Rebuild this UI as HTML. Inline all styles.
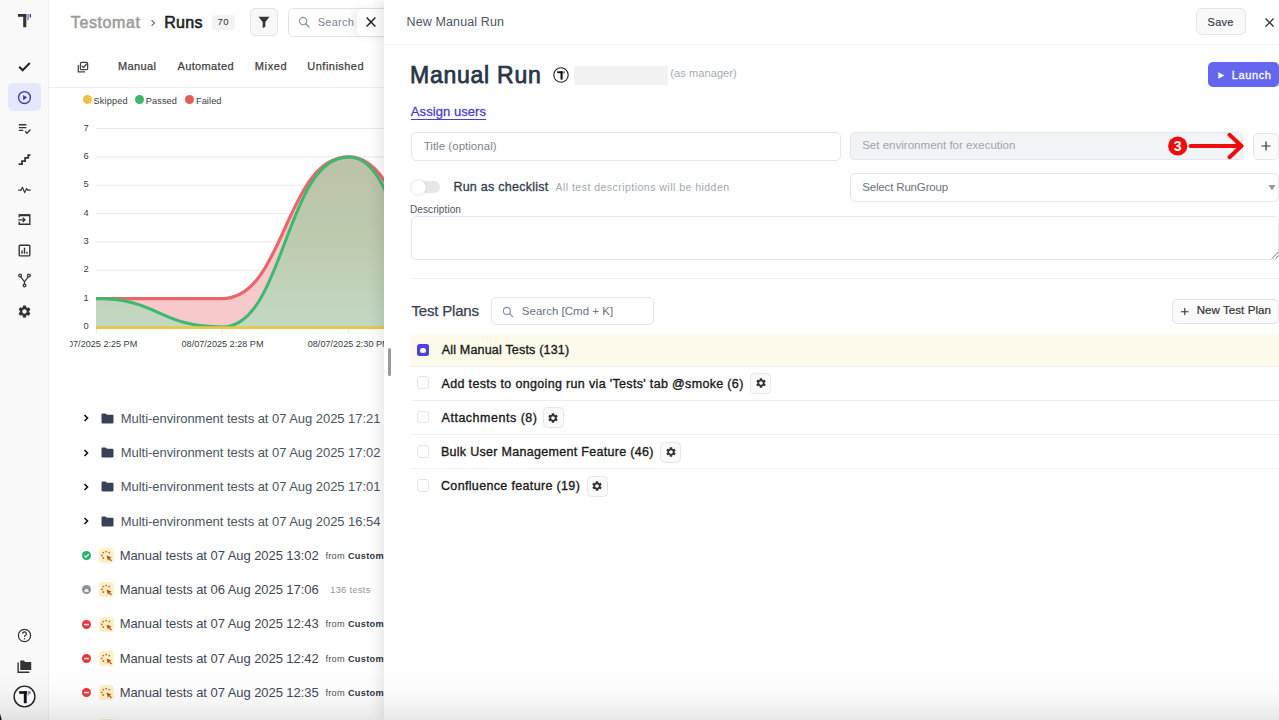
<!DOCTYPE html>
<html><head><meta charset="utf-8">
<style>
*{box-sizing:border-box;margin:0;padding:0}
html,body{width:1279px;height:720px;overflow:hidden;background:#fff;font-family:"Liberation Sans",sans-serif;}
.a{position:absolute;white-space:nowrap;line-height:1}
#side{position:absolute;left:0;top:0;width:49px;height:720px;background:#f9f9f9;border-right:1px solid #eeeeee}
#main{position:absolute;left:49px;top:0;width:336px;height:720px;background:#fff;overflow:hidden}
#drawer{position:absolute;left:385px;top:0;width:894px;height:720px;background:#fff;box-shadow:-6px 0 14px rgba(0,0,0,0.10);overflow:hidden}
</style></head><body>

<div id="side" style="z-index:0">
 <!-- logo -->
 <svg class="a" style="left:0;top:0" width="49" height="40" viewBox="0 0 49 40">
  <rect x="18" y="14" width="8.3" height="2.8" fill="#333"/>
  <rect x="23.2" y="14" width="3.1" height="13.3" rx="0.6" fill="#333"/>
  <path d="M27.2 14 L29.3 14 L28.9 20.3 L27 20.3 Z" fill="#8f98f5"/>
  <rect x="29.8" y="14" width="1.2" height="3.5" rx="0.5" fill="#333"/>
 </svg>
 <!-- check -->
 <svg class="a" style="left:17;top:59px;left:17px" width="15" height="15" viewBox="0 0 24 24"><path d="M3.5 12.5l5.5 5.5L20.5 6.5" fill="none" stroke="#222" stroke-width="3.2"/></svg>
 <!-- active play -->
 <div class="a" style="left:8px;top:83px;width:33px;height:28px;border-radius:5px;background:#e3e8fd"></div>
 <svg class="a" style="left:17px;top:90px" width="15" height="15" viewBox="0 0 24 24"><circle cx="12" cy="12" r="9.5" fill="none" stroke="#3d35b8" stroke-width="2.2"/><path d="M9.8 7.8v8.4l6.4-4.2z" fill="#3d35b8"/></svg>
 <!-- checklist -->
 <svg class="a" style="left:17px;top:121px" width="15" height="15" viewBox="0 0 24 24"><path d="M3 6h12M3 10.5h12M3 15h7" stroke="#333" stroke-width="2.1" fill="none"/><path d="M13 16.5l3 3 5.5-6" stroke="#333" stroke-width="2.1" fill="none"/></svg>
 <!-- stairs -->
 <svg class="a" style="left:17px;top:152px" width="15" height="15" viewBox="0 0 24 24"><path d="M2.5 19.5H8V14.5H13V9.5H18V5H21.5" stroke="#333" stroke-width="2.8" fill="none" stroke-linejoin="miter"/></svg>
 <!-- pulse -->
 <svg class="a" style="left:17px;top:182px" width="15" height="15" viewBox="0 0 24 24"><path d="M2 13h4.5l2.2-4.5 3.6 8.5 3-6.5 1.6 2.5H22" stroke="#333" stroke-width="1.9" fill="none" stroke-linejoin="round"/></svg>
 <!-- import -->
 <svg class="a" style="left:17px;top:212px" width="15" height="15" viewBox="0 0 24 24"><path d="M3.5 8.5V4.5h17v15h-17v-4" stroke="#333" stroke-width="2.2" fill="none"/><path d="M3.5 5.2h17" stroke="#333" stroke-width="3.2"/><path d="M2 12.5h10.5M9.2 9l3.5 3.5-3.5 3.5" stroke="#333" stroke-width="2.1" fill="none"/></svg>
 <!-- chart -->
 <svg class="a" style="left:17px;top:243px" width="15" height="15" viewBox="0 0 24 24"><rect x="3.5" y="3.5" width="17" height="17" rx="1.5" stroke="#333" stroke-width="2.2" fill="none"/><path d="M8 17v-5M12 17V7.5M16 17v-3" stroke="#333" stroke-width="2.2"/></svg>
 <!-- fork -->
 <svg class="a" style="left:17px;top:273px" width="15" height="15" viewBox="0 0 24 24"><circle cx="5" cy="4" r="2.2" stroke="#333" stroke-width="2" fill="none"/><circle cx="19" cy="4" r="2.2" stroke="#333" stroke-width="2" fill="none"/><circle cx="12" cy="20" r="2.2" stroke="#333" stroke-width="2" fill="none"/><path d="M6 6l6 8 6-8M12 14v4" stroke="#333" stroke-width="2" fill="none"/></svg>
 <!-- gear -->
 <svg class="a" style="left:17px;top:304px" width="15" height="15" viewBox="0 0 24 24"><path fill="#333" d="M19.14 12.94c.04-.3.06-.61.06-.94 0-.32-.02-.64-.07-.94l2.03-1.58a.49.49 0 0 0 .12-.61l-1.92-3.32a.488.488 0 0 0-.59-.22l-2.39.96c-.5-.38-1.03-.7-1.62-.94l-.36-2.54a.484.484 0 0 0-.48-.41h-3.84c-.24 0-.43.17-.47.41l-.36 2.54c-.59.24-1.13.57-1.62.94l-2.39-.96c-.22-.08-.47 0-.59.22L2.74 8.87c-.12.21-.08.47.12.61l2.03 1.58c-.05.3-.09.63-.09.94s.02.64.07.94l-2.03 1.58a.49.49 0 0 0-.12.61l1.92 3.32c.12.22.37.29.59.22l2.39-.96c.5.38 1.03.7 1.62.94l.36 2.54c.05.24.24.41.48.41h3.84c.24 0 .44-.17.47-.41l.36-2.54c.59-.24 1.13-.56 1.62-.94l2.39.96c.22.08.47 0 .59-.22l1.92-3.32c.12-.22.07-.47-.12-.61l-2.01-1.58zM12 15.6c-1.98 0-3.6-1.62-3.6-3.6s1.62-3.6 3.6-3.6 3.6 1.62 3.6 3.6-1.62 3.6-3.6 3.6z"/></svg>
 <!-- help -->
 <svg class="a" style="left:17px;top:628px" width="15" height="15" viewBox="0 0 24 24"><circle cx="12" cy="12" r="9.8" stroke="#333" stroke-width="2" fill="none"/><path d="M9 9.3a3 3 0 1 1 4.2 2.7c-.8.4-1.2 1-1.2 1.9v.6" stroke="#333" stroke-width="2" fill="none"/><circle cx="12" cy="17.3" r="1.2" fill="#333"/></svg>
 <!-- folders -->
 <svg class="a" style="left:16px;top:658px" width="17" height="17" viewBox="0 0 24 24"><path d="M3 6.5v13.5h16" stroke="#333" stroke-width="2" fill="none"/><path d="M6 3.5h5l2 2h8.5v11.5H6z" fill="#333"/></svg>
 <!-- avatar logo -->
 <svg class="a" style="left:13px;top:685px" width="23" height="23" viewBox="0 0 23 23"><circle cx="11.5" cy="11.5" r="10.4" fill="#fff" stroke="#222" stroke-width="1.4"/><rect x="6.2" y="6.2" width="7.8" height="2.6" fill="#111"/><rect x="10.8" y="6.2" width="2.9" height="12" fill="#111"/><path d="M14.7 6.2h1.3l-.3 4.3h-1z" fill="#6a8cf7"/><rect x="16.4" y="6.2" width="0.9" height="2.6" fill="#222"/></svg>
</div>

<div id="mainc" style="position:absolute;left:49px;top:0;width:336px;height:720px;overflow:hidden;background:#fff"><div style="position:absolute;left:-49px;top:0;width:1279px;height:720px">
<div class="a t" id="testomat" style="left:70.78px;top:14.72px;font-size:16px;color:#9c9c9c;font-weight:normal;letter-spacing:0.618px;-webkit-text-stroke:0.55px #9c9c9c">Testomat</div>
<svg class="a" style="left:149px;top:18px" width="8" height="10" viewBox="0 0 8 10"><path d="M2.6 2.2l2.8 2.8-2.8 2.8" stroke="#666" stroke-width="1.1" fill="none"/></svg>
<div class="a t" id="runs" style="left:164.24px;top:14.72px;font-size:16px;color:#1c1c1c;font-weight:normal;letter-spacing:0.268px;-webkit-text-stroke:0.55px #1c1c1c">Runs</div>
<div class="a" style="left:211.8px;top:14.8px;width:22.8px;height:15px;border-radius:4px;background:#f3f3f3"></div>
<div class="a t" id="b70" style="left:217.43px;top:17.31px;font-size:9.5px;color:#333;font-weight:normal;letter-spacing:0.439px;">70</div>
<div class="a" style="left:250px;top:8px;width:27.5px;height:27.6px;border-radius:5px;background:#f8f8f8;border:1px solid #e3e3e3"></div>
<svg class="a" style="left:257px;top:15px" width="14" height="14" viewBox="0 0 24 24"><path d="M2.5 3h19l-7.2 9.2V20l-4.6 2.2v-10z" fill="#333"/></svg>
<div class="a" style="left:287.5px;top:8.3px;width:120px;height:28.3px;border-radius:5px;background:#fff;border:1px solid #e2e5ea"></div>
<svg class="a" style="left:297.5px;top:15.5px" width="12.5" height="12.5" viewBox="0 0 24 24"><circle cx="9.8" cy="9.8" r="7" stroke="#8c95a5" stroke-width="2.3" fill="none"/><path d="M15 15l6.2 6.2" stroke="#8c95a5" stroke-width="2.5" stroke-linecap="round"/></svg>
<div class="a t" id="search" style="left:317.71px;top:16.50px;font-size:11px;color:#7c8594;font-weight:normal;letter-spacing:0.256px;">Search</div>
<div class="a" style="left:356.8px;top:9.1px;width:40px;height:26.7px;border-radius:6px;background:#fff;box-shadow:-5px 0 9px rgba(0,0,0,0.07)"></div>
<svg class="a" style="left:365.8px;top:17.2px" width="10" height="10" viewBox="0 0 10 10"><path d="M0.6 0.6l8.8 8.8M9.4 0.6l-8.8 8.8" stroke="#222" stroke-width="1.45"/></svg>
<svg class="a" style="left:77px;top:60.8px" width="12" height="12" viewBox="0 0 24 24"><path d="M2.5 8v13.5H16" stroke="#444" stroke-width="2.5" fill="none"/><rect x="6.8" y="2.8" width="14.5" height="14.5" rx="2.5" stroke="#444" stroke-width="2.5" fill="none"/><path d="M9.8 9.8l3.2 3.2 6.5-7.5" stroke="#444" stroke-width="2.7" fill="none"/></svg>
<div class="a t" id="tman" style="left:117.89px;top:61.30px;font-size:11px;color:#404040;font-weight:normal;letter-spacing:0.422px;-webkit-text-stroke:0.25px #404040">Manual</div>
<div class="a t" id="taut" style="left:177.41px;top:61.30px;font-size:11px;color:#404040;font-weight:normal;letter-spacing:0.384px;-webkit-text-stroke:0.25px #404040">Automated</div>
<div class="a t" id="tmix" style="left:254.75px;top:61.30px;font-size:11px;color:#404040;font-weight:normal;letter-spacing:0.643px;-webkit-text-stroke:0.25px #404040">Mixed</div>
<div class="a t" id="tunf" style="left:307.36px;top:61.30px;font-size:11px;color:#404040;font-weight:normal;letter-spacing:0.469px;-webkit-text-stroke:0.25px #404040">Unfinished</div>
<div class="a" style="left:49px;top:87px;width:336px;height:1px;background:#efefef"></div>
<div class="a" style="left:82.55px;top:95.2px;width:9.1px;height:9.1px;border-radius:50%;background:#eec244"></div>
<div class="a" style="left:134.64999999999998px;top:95.2px;width:9.1px;height:9.1px;border-radius:50%;background:#3fb56b"></div>
<div class="a" style="left:184.75px;top:95.2px;width:9.1px;height:9.1px;border-radius:50%;background:#e85b5b"></div>
<div class="a t" id="lsk" style="left:93.45px;top:97.31px;font-size:9.2px;color:#373d3f;font-weight:normal;letter-spacing:0.146px;">Skipped</div>
<div class="a t" id="lpa" style="left:145.79px;top:97.31px;font-size:9.2px;color:#373d3f;font-weight:normal;letter-spacing:0.094px;">Passed</div>
<div class="a t" id="lfa" style="left:195.95px;top:97.31px;font-size:9.2px;color:#373d3f;font-weight:normal;letter-spacing:0.100px;">Failed</div>
<svg class="a" style="left:70px;top:0" width="315" height="360" viewBox="70 0 315 360">
  <defs>
   <linearGradient id="gg" gradientUnits="userSpaceOnUse" x1="0" y1="157" x2="0" y2="327"><stop offset="0" stop-color="#bdc1a8"/><stop offset="0.45" stop-color="#bccaae"/><stop offset="1" stop-color="#c3d8c3"/></linearGradient>
  </defs>
  <g stroke="#e9e9e9" stroke-width="1">
   <path d="M96 128.5H400M96 156.9H400M96 185.2H400M96 213.6H400M96 241.9H400M96 270.3H400M96 298.6H400"/>
  </g>
  <g font-size="9.3" fill="#373d3f" text-anchor="middle" font-family="Liberation Sans">
   <text x="86" y="130.6">7</text><text x="86" y="159.0">6</text><text x="86" y="187.3">5</text><text x="86" y="215.7">4</text><text x="86" y="244.0">3</text><text x="86" y="272.4">2</text><text x="86" y="300.7">1</text><text x="86" y="329.1">0</text>
  </g>
  <path d="M96 298.6 C159 298.6 159 298.6 222 298.6 C285 298.6 285 156.9 348.7 156.9 C411.8 156.9 411.8 327 474.9 327 L96 327Z" fill="#f7c9cb"/>
  <path d="M96 298.6 C159 298.6 159 327 222 327 C285 327 285 156.9 348.7 156.9 C404.3 156.9 404.3 327 460 327 L96 327Z" fill="url(#gg)"/>
  <path d="M96 298.6 C159 298.6 159 298.6 222 298.6 C285 298.6 285 156.9 348.7 156.9 C411.8 156.9 411.8 327 474.9 327" fill="none" stroke="#e8676b" stroke-width="3.2"/>
  <path d="M96 298.6 C159 298.6 159 327 222 327 C285 327 285 156.9 348.7 156.9 C404.3 156.9 404.3 327 460 327" fill="none" stroke="#3bba6f" stroke-width="3"/>
  <path d="M96 327.6H400" stroke="#e9c744" stroke-width="2.8"/>
  <path d="M96.3 329v4M222 329v4M348.7 329v4" stroke="#e0e0e0" stroke-width="1"/>
  <g font-size="9.1" fill="#373d3f" text-anchor="middle" font-family="Liberation Sans">
   <text x="96.3" y="346.6">08/07/2025 2:25 PM</text><text x="222.5" y="346.6">08/07/2025 2:28 PM</text><text x="348.7" y="346.6">08/07/2025 2:30 PM</text>
  </g>
 </svg>

<svg class="a" style="left:83px;top:414.40px" width="7" height="8" viewBox="0 0 7 8"><path d="M1.5 1l3 3-3 3" stroke="#111" stroke-width="1.6" fill="none"/></svg>
<svg class="a" style="left:101px;top:412.90px" width="13" height="11" viewBox="0 0 13 11"><path d="M0.5 1.2Q0.5 0.4 1.3 0.4H4.6L6 1.8H11.7Q12.5 1.8 12.5 2.6V9.6Q12.5 10.4 11.7 10.4H1.3Q0.5 10.4 0.5 9.6Z" fill="#384256"/></svg>
<div class="a t" id="mf0" style="left:120.77px;top:411.90px;font-size:13px;color:#4b5563;font-weight:normal;letter-spacing:-0.045px;">Multi-environment tests at 07 Aug 2025 17:21</div>
<svg class="a" style="left:83px;top:448.65px" width="7" height="8" viewBox="0 0 7 8"><path d="M1.5 1l3 3-3 3" stroke="#111" stroke-width="1.6" fill="none"/></svg>
<svg class="a" style="left:101px;top:447.15px" width="13" height="11" viewBox="0 0 13 11"><path d="M0.5 1.2Q0.5 0.4 1.3 0.4H4.6L6 1.8H11.7Q12.5 1.8 12.5 2.6V9.6Q12.5 10.4 11.7 10.4H1.3Q0.5 10.4 0.5 9.6Z" fill="#384256"/></svg>
<div class="a t" id="mf1" style="left:120.77px;top:446.15px;font-size:13px;color:#4b5563;font-weight:normal;letter-spacing:-0.045px;">Multi-environment tests at 07 Aug 2025 17:02</div>
<svg class="a" style="left:83px;top:482.90px" width="7" height="8" viewBox="0 0 7 8"><path d="M1.5 1l3 3-3 3" stroke="#111" stroke-width="1.6" fill="none"/></svg>
<svg class="a" style="left:101px;top:481.40px" width="13" height="11" viewBox="0 0 13 11"><path d="M0.5 1.2Q0.5 0.4 1.3 0.4H4.6L6 1.8H11.7Q12.5 1.8 12.5 2.6V9.6Q12.5 10.4 11.7 10.4H1.3Q0.5 10.4 0.5 9.6Z" fill="#384256"/></svg>
<div class="a t" id="mf2" style="left:120.77px;top:480.40px;font-size:13px;color:#4b5563;font-weight:normal;letter-spacing:-0.045px;">Multi-environment tests at 07 Aug 2025 17:01</div>
<svg class="a" style="left:83px;top:517.15px" width="7" height="8" viewBox="0 0 7 8"><path d="M1.5 1l3 3-3 3" stroke="#111" stroke-width="1.6" fill="none"/></svg>
<svg class="a" style="left:101px;top:515.65px" width="13" height="11" viewBox="0 0 13 11"><path d="M0.5 1.2Q0.5 0.4 1.3 0.4H4.6L6 1.8H11.7Q12.5 1.8 12.5 2.6V9.6Q12.5 10.4 11.7 10.4H1.3Q0.5 10.4 0.5 9.6Z" fill="#384256"/></svg>
<div class="a t" id="mf3" style="left:120.77px;top:514.65px;font-size:13px;color:#4b5563;font-weight:normal;letter-spacing:-0.045px;">Multi-environment tests at 07 Aug 2025 16:54</div>
<svg class="a" style="left:82.3px;top:551.10px" width="9" height="9" viewBox="0 0 9 9"><circle cx="4.5" cy="4.5" r="4.5" fill="#21b66b"/><path d="M2.4 4.6l1.5 1.5 2.8-2.9" stroke="#fff" stroke-width="1.3" fill="none"/></svg>
<div class="a" style="left:98.5px;top:548.1px;width:15px;height:15px;border-radius:3.5px;background:#fdf0c6"></div>
<svg class="a" style="left:98.5px;top:548.10px" width="15" height="15" viewBox="0 0 15 15"><g fill="#cc6a2a"><circle cx="4.3" cy="4.6" r="0.95"/><circle cx="7.2" cy="3.6" r="0.95"/><circle cx="10.2" cy="4.6" r="0.95"/><circle cx="2.9" cy="7.4" r="0.95"/><circle cx="4.3" cy="10" r="0.95"/></g><path d="M7.6 7.6L12.6 9.4L10.6 10.3L12.9 12.6L12.1 13.4L9.8 11.1L8.9 13.1Z" fill="#b9500f"/></svg>
<div class="a t" id="mm0" style="left:119.67px;top:548.90px;font-size:13px;color:#3f4857;font-weight:normal;letter-spacing:-0.060px;">Manual tests at 07 Aug 2025 13:02</div>
<div class="a t" id="fc0" style="left:325.38px;top:551.81px;font-size:9.2px;color:#4a505c;font-weight:normal;letter-spacing:0.316px;">from <b style="color:#2e3645">Custom</b></div>
<svg class="a" style="left:82.3px;top:585.35px" width="9" height="9" viewBox="0 0 9 9"><circle cx="4.5" cy="4.5" r="4.5" fill="#8b92a0"/><path d="M2 6.2Q4.5 1.5 7 6.2Q4.5 8 2 6.2" fill="#fff" opacity="0.85"/></svg>
<div class="a" style="left:98.5px;top:582.35px;width:15px;height:15px;border-radius:3.5px;background:#fdf0c6"></div>
<svg class="a" style="left:98.5px;top:582.35px" width="15" height="15" viewBox="0 0 15 15"><g fill="#cc6a2a"><circle cx="4.3" cy="4.6" r="0.95"/><circle cx="7.2" cy="3.6" r="0.95"/><circle cx="10.2" cy="4.6" r="0.95"/><circle cx="2.9" cy="7.4" r="0.95"/><circle cx="4.3" cy="10" r="0.95"/></g><path d="M7.6 7.6L12.6 9.4L10.6 10.3L12.9 12.6L12.1 13.4L9.8 11.1L8.9 13.1Z" fill="#b9500f"/></svg>
<div class="a t" id="mm1" style="left:119.67px;top:583.15px;font-size:13px;color:#3f4857;font-weight:normal;letter-spacing:-0.060px;">Manual tests at 06 Aug 2025 17:06</div>
<div class="a t" id="t136" style="left:330.16px;top:586.06px;font-size:9.2px;color:#8f959f;font-weight:normal;letter-spacing:0.364px;">136 tests</div>
<svg class="a" style="left:82.3px;top:619.60px" width="9" height="9" viewBox="0 0 9 9"><circle cx="4.5" cy="4.5" r="4.5" fill="#e8373a"/><rect x="2.2" y="3.8" width="4.6" height="1.5" fill="#fff"/></svg>
<div class="a" style="left:98.5px;top:616.6px;width:15px;height:15px;border-radius:3.5px;background:#fdf0c6"></div>
<svg class="a" style="left:98.5px;top:616.60px" width="15" height="15" viewBox="0 0 15 15"><g fill="#cc6a2a"><circle cx="4.3" cy="4.6" r="0.95"/><circle cx="7.2" cy="3.6" r="0.95"/><circle cx="10.2" cy="4.6" r="0.95"/><circle cx="2.9" cy="7.4" r="0.95"/><circle cx="4.3" cy="10" r="0.95"/></g><path d="M7.6 7.6L12.6 9.4L10.6 10.3L12.9 12.6L12.1 13.4L9.8 11.1L8.9 13.1Z" fill="#b9500f"/></svg>
<div class="a t" id="mm2" style="left:119.67px;top:617.40px;font-size:13px;color:#3f4857;font-weight:normal;letter-spacing:-0.060px;">Manual tests at 07 Aug 2025 12:43</div>
<div class="a t" id="fc2" style="left:325.38px;top:620.31px;font-size:9.2px;color:#4a505c;font-weight:normal;letter-spacing:0.316px;">from <b style="color:#2e3645">Custom</b></div>
<svg class="a" style="left:82.3px;top:653.85px" width="9" height="9" viewBox="0 0 9 9"><circle cx="4.5" cy="4.5" r="4.5" fill="#e8373a"/><rect x="2.2" y="3.8" width="4.6" height="1.5" fill="#fff"/></svg>
<div class="a" style="left:98.5px;top:650.85px;width:15px;height:15px;border-radius:3.5px;background:#fdf0c6"></div>
<svg class="a" style="left:98.5px;top:650.85px" width="15" height="15" viewBox="0 0 15 15"><g fill="#cc6a2a"><circle cx="4.3" cy="4.6" r="0.95"/><circle cx="7.2" cy="3.6" r="0.95"/><circle cx="10.2" cy="4.6" r="0.95"/><circle cx="2.9" cy="7.4" r="0.95"/><circle cx="4.3" cy="10" r="0.95"/></g><path d="M7.6 7.6L12.6 9.4L10.6 10.3L12.9 12.6L12.1 13.4L9.8 11.1L8.9 13.1Z" fill="#b9500f"/></svg>
<div class="a t" id="mm3" style="left:119.67px;top:651.65px;font-size:13px;color:#3f4857;font-weight:normal;letter-spacing:-0.060px;">Manual tests at 07 Aug 2025 12:42</div>
<div class="a t" id="fc3" style="left:325.38px;top:654.56px;font-size:9.2px;color:#4a505c;font-weight:normal;letter-spacing:0.316px;">from <b style="color:#2e3645">Custom</b></div>
<svg class="a" style="left:82.3px;top:688.10px" width="9" height="9" viewBox="0 0 9 9"><circle cx="4.5" cy="4.5" r="4.5" fill="#e8373a"/><rect x="2.2" y="3.8" width="4.6" height="1.5" fill="#fff"/></svg>
<div class="a" style="left:98.5px;top:685.1px;width:15px;height:15px;border-radius:3.5px;background:#fdf0c6"></div>
<svg class="a" style="left:98.5px;top:685.10px" width="15" height="15" viewBox="0 0 15 15"><g fill="#cc6a2a"><circle cx="4.3" cy="4.6" r="0.95"/><circle cx="7.2" cy="3.6" r="0.95"/><circle cx="10.2" cy="4.6" r="0.95"/><circle cx="2.9" cy="7.4" r="0.95"/><circle cx="4.3" cy="10" r="0.95"/></g><path d="M7.6 7.6L12.6 9.4L10.6 10.3L12.9 12.6L12.1 13.4L9.8 11.1L8.9 13.1Z" fill="#b9500f"/></svg>
<div class="a t" id="mm4" style="left:119.67px;top:685.90px;font-size:13px;color:#3f4857;font-weight:normal;letter-spacing:-0.060px;">Manual tests at 07 Aug 2025 12:35</div>
<div class="a t" id="fc4" style="left:325.38px;top:688.81px;font-size:9.2px;color:#4a505c;font-weight:normal;letter-spacing:0.316px;">from <b style="color:#2e3645">Custom</b></div>
<svg class="a" style="left:82.3px;top:722.35px" width="9" height="9" viewBox="0 0 9 9"><circle cx="4.5" cy="4.5" r="4.5" fill="#e8373a"/><rect x="2.2" y="3.8" width="4.6" height="1.5" fill="#fff"/></svg>
<div class="a" style="left:98.5px;top:719.35px;width:15px;height:15px;border-radius:3.5px;background:#fdf0c6"></div>
<svg class="a" style="left:98.5px;top:719.35px" width="15" height="15" viewBox="0 0 15 15"><g fill="#cc6a2a"><circle cx="4.3" cy="4.6" r="0.95"/><circle cx="7.2" cy="3.6" r="0.95"/><circle cx="10.2" cy="4.6" r="0.95"/><circle cx="2.9" cy="7.4" r="0.95"/><circle cx="4.3" cy="10" r="0.95"/></g><path d="M7.6 7.6L12.6 9.4L10.6 10.3L12.9 12.6L12.1 13.4L9.8 11.1L8.9 13.1Z" fill="#b9500f"/></svg>
</div></div>
<div class="a" style="left:384px;top:0px;width:895px;height:720px;background:#fff;box-shadow:-5px 0 12px rgba(0,0,0,0.09)"></div>
<div class="a" style="left:387.9px;top:348.3px;width:3.1px;height:27.4px;border-radius:2px;background:#9a9a9a"></div>
<div class="a t" id="nmr" style="left:406.57px;top:16.01px;font-size:12.5px;color:#4b5563;font-weight:normal;letter-spacing:0.115px;">New Manual Run</div>
<div class="a" style="left:1195.6px;top:8.1px;width:50.4px;height:27.3px;border-radius:6px;background:#f9f9f9;border:1px solid #e5e5e5"></div>
<div class="a t" id="save" style="left:1207.60px;top:16.50px;font-size:11px;color:#374151;font-weight:normal;letter-spacing:0.237px;-webkit-text-stroke:0.2px #374151">Save</div>
<svg class="a" style="left:1264.7px;top:17.7px" width="9.2" height="9.2" viewBox="0 0 10 10"><path d="M0.6 0.6l8.8 8.8M9.4 0.6l-8.8 8.8" stroke="#333" stroke-width="1.4"/></svg>
<div class="a" style="left:385px;top:44px;width:894px;height:1px;background:#f1f2f4"></div>
<div class="a t" id="mrun" style="left:410.12px;top:64.01px;font-size:23px;color:#283548;font-weight:normal;letter-spacing:0.735px;-webkit-text-stroke:0.75px #283548">Manual Run</div>
<svg class="a" style="left:553px;top:67px" width="16" height="16" viewBox="0 0 16 16"><circle cx="8" cy="8" r="7.2" fill="#fff" stroke="#222" stroke-width="1.1"/><rect x="4.2" y="4.3" width="5.4" height="1.9" fill="#111"/><rect x="7.5" y="4.3" width="2.1" height="8.3" fill="#111"/><path d="M10.2 4.3h.9l-.2 3h-.7z" fill="#6a8cf7"/><rect x="11.4" y="4.3" width="0.6" height="1.9" fill="#222"/></svg>
<div class="a" style="left:574px;top:66.3px;width:93.6px;height:18.7px;background:#f2f2f2"></div>
<div class="a t" id="asm" style="left:670.23px;top:68.30px;font-size:11px;color:#a4aab6;font-weight:normal;letter-spacing:0.103px;">(as manager)</div>
<div class="a" style="left:1207.8px;top:62.4px;width:71.2px;height:24.6px;border-radius:5px;background:#6467ee"></div>
<svg class="a" style="left:1218px;top:71.5px" width="7" height="7" viewBox="0 0 7 7"><path d="M0.3 0.2L6.4 3.5L0.3 6.8z" fill="#fff"/></svg>
<div class="a t" id="launch" style="left:1231.86px;top:69.50px;font-size:11px;color:#fff;font-weight:normal;letter-spacing:0.582px;-webkit-text-stroke:0.3px #fff">Launch</div>
<div class="a t" id="assign" style="left:410.85px;top:105.00px;font-size:13px;color:#463fd4;font-weight:normal;letter-spacing:0.069px;text-decoration:underline;text-underline-offset:2.5px;text-decoration-thickness:1.3px;-webkit-text-stroke:0.3px #463fd4">Assign users</div>
<div class="a" style="left:410.6px;top:132px;width:430px;height:28.6px;border-radius:5px;border:1px solid #e4e6ea;background:#fff"></div>
<div class="a t" id="title" style="left:423.69px;top:140.91px;font-size:11.5px;color:#7d8592;font-weight:normal;letter-spacing:0.029px;">Title (optional)</div>
<div class="a" style="left:850px;top:131.7px;width:393px;height:28.5px;border-radius:4px;border:1px solid #e3e7f4;background:#f2f3f6"></div>
<div class="a t" id="env" style="left:862.18px;top:140.20px;font-size:11.5px;color:#9ca3af;font-weight:normal;letter-spacing:0.017px;">Set environment for execution</div>
<svg class="a" style="left:1160px;top:132px" width="90" height="29" viewBox="0 0 90 29"><circle cx="17.7" cy="14" r="9.6" fill="#ee0d0d"/><text x="17.7" y="19.1" font-family="Liberation Sans" font-weight="bold" font-size="14" fill="#fff" text-anchor="middle">3</text><path d="M30.5 14H80" stroke="#ee0d0d" stroke-width="4" stroke-linecap="round"/><path d="M69.5 2.8L81.5 14L69.5 25.2" stroke="#ee0d0d" stroke-width="4" fill="none" stroke-linecap="round" stroke-linejoin="round"/></svg>
<div class="a" style="left:1252.5px;top:132.5px;width:26.5px;height:27.1px;border-radius:5px;border:1px solid #e5e5e5;background:#fafafa"></div>
<svg class="a" style="left:1261px;top:141px" width="10" height="10" viewBox="0 0 10 10"><path d="M5 0.5v9M0.5 5h9" stroke="#333" stroke-width="1.2"/></svg>
<div class="a" style="left:411px;top:181px;width:29px;height:12px;border-radius:6px;background:#e5e7eb"></div>
<div class="a" style="left:410.5px;top:179.8px;width:15px;height:15px;border-radius:50%;background:#fff;box-shadow:0 0 1.5px rgba(0,0,0,0.28)"></div>
<div class="a t" id="rac" style="left:453.38px;top:181.10px;font-size:12.5px;color:#333c4b;font-weight:normal;letter-spacing:0.252px;-webkit-text-stroke:0.3px #333c4b">Run as checklist</div>
<div class="a t" id="atd" style="left:555.47px;top:182.11px;font-size:10.5px;color:#a1a7b2;font-weight:normal;letter-spacing:0.474px;">All test descriptions will be hidden</div>
<div class="a" style="left:850px;top:173px;width:429px;height:28.5px;border-radius:5px;border:1px solid #e4e6ea;background:#fff"></div>
<div class="a t" id="srg" style="left:862.18px;top:182.41px;font-size:11.5px;color:#6b7280;font-weight:normal;letter-spacing:-0.157px;">Select RunGroup</div>
<svg class="a" style="left:1268px;top:183.5px" width="8" height="7" viewBox="0 0 8 7"><path d="M0.5 1h7L4 6.5z" fill="#999"/></svg>
<div class="a t" id="desc" style="left:410.00px;top:204.50px;font-size:10px;color:#4b5563;font-weight:normal;letter-spacing:0.088px;">Description</div>
<div class="a" style="left:411px;top:216px;width:868px;height:43.5px;border-radius:5px;border:1px solid #e4e6ea;background:#fff"></div>
<svg class="a" style="left:1270px;top:250px" width="9" height="9" viewBox="0 0 9 9"><path d="M8.5 2L2 8.5M8.5 5.5L5.5 8.5" stroke="#777" stroke-width="1"/></svg>
<div class="a" style="left:411px;top:278px;width:880px;height:1px;background:#eeeff1"></div>
<div class="a t" id="tplans" style="left:411.44px;top:302.90px;font-size:15px;color:#374151;font-weight:normal;letter-spacing:-0.184px;-webkit-text-stroke:0.25px #374151">Test Plans</div>
<div class="a" style="left:491.1px;top:297.4px;width:162.5px;height:28.1px;border-radius:5px;border:1px solid #e4e6ea;background:#fff"></div>
<svg class="a" style="left:501.5px;top:306px" width="12" height="12" viewBox="0 0 24 24"><circle cx="9.8" cy="9.8" r="7" stroke="#8a93a6" stroke-width="2.3" fill="none"/><path d="M15 15l6.2 6.2" stroke="#8a93a6" stroke-width="2.5" stroke-linecap="round"/></svg>
<div class="a t" id="scmd" style="left:521.87px;top:306.30px;font-size:11.5px;color:#6b7280;font-weight:normal;letter-spacing:0.009px;">Search [Cmd + K]</div>
<div class="a" style="left:1172.3px;top:299.3px;width:106.7px;height:24.4px;border-radius:5px;border:1px solid #e3e3e3;background:#fafafa"></div>
<svg class="a" style="left:1181px;top:307.7px" width="7.6" height="7.6" viewBox="0 0 8 8"><path d="M4 0v8M0 4h8" stroke="#333" stroke-width="1.15"/></svg>
<div class="a t" id="ntp" style="left:1196.63px;top:305.41px;font-size:11.5px;color:#333;font-weight:normal;letter-spacing:0.081px;-webkit-text-stroke:0.2px #333">New Test Plan</div>
<div class="a" style="left:411px;top:335px;width:880px;height:30.5px;background:#fefaeb"></div>
<div class="a" style="left:416.9px;top:344px;width:12.1px;height:12.2px;border-radius:2.5px;background:#4b44e0"></div>
<div class="a" style="left:420.25px;top:347.65px;width:5.3px;height:5.3px;border-radius:50%;background:#fff"></div>
<div class="a t" id="p0" style="left:441.72px;top:344.21px;font-size:12.5px;color:#1a1a1a;font-weight:normal;letter-spacing:0.190px;-webkit-text-stroke:0.35px #1a1a1a">All Manual Tests (131)</div>
<div class="a" style="left:411px;top:365.5px;width:880px;height:1px;background:#efeff1"></div>
<div class="a" style="left:416.9px;top:376.3px;width:12.5px;height:12.8px;border-radius:3px;border:1px solid #e3e5e9;background:#fff"></div>
<div class="a t" id="p1" style="left:441.57px;top:377.51px;font-size:12.5px;color:#1a1a1a;font-weight:normal;letter-spacing:0.336px;-webkit-text-stroke:0.35px #1a1a1a">Add tests to ongoing run via 'Tests' tab @smoke (6)</div>
<div class="a" style="left:750px;top:372.9px;width:21px;height:21px;border-radius:4.5px;border:1px solid #e6e6e6;background:#fafafa"></div>
<svg class="a" style="left:754.50px;top:377.40px" width="12" height="12" viewBox="0 0 24 24"><path fill="#333" d="M19.14 12.94c.04-.3.06-.61.06-.94 0-.32-.02-.64-.07-.94l2.03-1.58a.49.49 0 0 0 .12-.61l-1.92-3.32a.488.488 0 0 0-.59-.22l-2.39.96c-.5-.38-1.03-.7-1.62-.94l-.36-2.54a.484.484 0 0 0-.48-.41h-3.84c-.24 0-.43.17-.47.41l-.36 2.54c-.59.24-1.13.57-1.62.94l-2.39-.96c-.22-.08-.47 0-.59.22L2.74 8.87c-.12.21-.08.47.12.61l2.03 1.58c-.05.3-.09.63-.09.94s.02.64.07.94l-2.03 1.58a.49.49 0 0 0-.12.61l1.92 3.32c.12.22.37.29.59.22l2.39-.96c.5.38 1.03.7 1.62.94l.36 2.54c.05.24.24.41.48.41h3.84c.24 0 .44-.17.47-.41l.36-2.54c.59-.24 1.13-.56 1.62-.94l2.39.96c.22.08.47 0 .59-.22l1.92-3.32c.12-.22.07-.47-.12-.61l-2.01-1.58zM12 15.6c-1.98 0-3.6-1.62-3.6-3.6s1.62-3.6 3.6-3.6 3.6 1.62 3.6 3.6-1.62 3.6-3.6 3.6z"/></svg>
<div class="a" style="left:411px;top:399.8px;width:880px;height:1px;background:#efeff1"></div>
<div class="a" style="left:416.9px;top:410.6px;width:12.5px;height:12.8px;border-radius:3px;border:1px solid #e3e5e9;background:#fff"></div>
<div class="a t" id="p2" style="left:441.57px;top:411.82px;font-size:12.5px;color:#1a1a1a;font-weight:normal;letter-spacing:0.510px;-webkit-text-stroke:0.35px #1a1a1a">Attachments (8)</div>
<div class="a" style="left:542.8px;top:407.2px;width:21px;height:21px;border-radius:4.5px;border:1px solid #e6e6e6;background:#fafafa"></div>
<svg class="a" style="left:547.30px;top:411.70px" width="12" height="12" viewBox="0 0 24 24"><path fill="#333" d="M19.14 12.94c.04-.3.06-.61.06-.94 0-.32-.02-.64-.07-.94l2.03-1.58a.49.49 0 0 0 .12-.61l-1.92-3.32a.488.488 0 0 0-.59-.22l-2.39.96c-.5-.38-1.03-.7-1.62-.94l-.36-2.54a.484.484 0 0 0-.48-.41h-3.84c-.24 0-.43.17-.47.41l-.36 2.54c-.59.24-1.13.57-1.62.94l-2.39-.96c-.22-.08-.47 0-.59.22L2.74 8.87c-.12.21-.08.47.12.61l2.03 1.58c-.05.3-.09.63-.09.94s.02.64.07.94l-2.03 1.58a.49.49 0 0 0-.12.61l1.92 3.32c.12.22.37.29.59.22l2.39-.96c.5.38 1.03.7 1.62.94l.36 2.54c.05.24.24.41.48.41h3.84c.24 0 .44-.17.47-.41l.36-2.54c.59-.24 1.13-.56 1.62-.94l2.39.96c.22.08.47 0 .59-.22l1.92-3.32c.12-.22.07-.47-.12-.61l-2.01-1.58zM12 15.6c-1.98 0-3.6-1.62-3.6-3.6s1.62-3.6 3.6-3.6 3.6 1.62 3.6 3.6-1.62 3.6-3.6 3.6z"/></svg>
<div class="a" style="left:411px;top:434.1px;width:880px;height:1px;background:#efeff1"></div>
<div class="a" style="left:416.9px;top:444.90000000000003px;width:12.5px;height:12.8px;border-radius:3px;border:1px solid #e3e5e9;background:#fff"></div>
<div class="a t" id="p3" style="left:440.92px;top:446.10px;font-size:12.5px;color:#1a1a1a;font-weight:normal;letter-spacing:0.298px;-webkit-text-stroke:0.35px #1a1a1a">Bulk User Management Feature (46)</div>
<div class="a" style="left:660px;top:441.5px;width:21px;height:21px;border-radius:4.5px;border:1px solid #e6e6e6;background:#fafafa"></div>
<svg class="a" style="left:664.50px;top:446.00px" width="12" height="12" viewBox="0 0 24 24"><path fill="#333" d="M19.14 12.94c.04-.3.06-.61.06-.94 0-.32-.02-.64-.07-.94l2.03-1.58a.49.49 0 0 0 .12-.61l-1.92-3.32a.488.488 0 0 0-.59-.22l-2.39.96c-.5-.38-1.03-.7-1.62-.94l-.36-2.54a.484.484 0 0 0-.48-.41h-3.84c-.24 0-.43.17-.47.41l-.36 2.54c-.59.24-1.13.57-1.62.94l-2.39-.96c-.22-.08-.47 0-.59.22L2.74 8.87c-.12.21-.08.47.12.61l2.03 1.58c-.05.3-.09.63-.09.94s.02.64.07.94l-2.03 1.58a.49.49 0 0 0-.12.61l1.92 3.32c.12.22.37.29.59.22l2.39-.96c.5.38 1.03.7 1.62.94l.36 2.54c.05.24.24.41.48.41h3.84c.24 0 .44-.17.47-.41l.36-2.54c.59-.24 1.13-.56 1.62-.94l2.39.96c.22.08.47 0 .59-.22l1.92-3.32c.12-.22.07-.47-.12-.61l-2.01-1.58zM12 15.6c-1.98 0-3.6-1.62-3.6-3.6s1.62-3.6 3.6-3.6 3.6 1.62 3.6 3.6-1.62 3.6-3.6 3.6z"/></svg>
<div class="a" style="left:411px;top:468.3px;width:880px;height:1px;background:#efeff1"></div>
<div class="a" style="left:416.9px;top:479.1px;width:12.5px;height:12.8px;border-radius:3px;border:1px solid #e3e5e9;background:#fff"></div>
<div class="a t" id="p4" style="left:440.98px;top:480.32px;font-size:12.5px;color:#1a1a1a;font-weight:normal;letter-spacing:0.342px;-webkit-text-stroke:0.35px #1a1a1a">Confluence feature (19)</div>
<div class="a" style="left:586.5px;top:475.7px;width:21px;height:21px;border-radius:4.5px;border:1px solid #e6e6e6;background:#fafafa"></div>
<svg class="a" style="left:591.00px;top:480.20px" width="12" height="12" viewBox="0 0 24 24"><path fill="#333" d="M19.14 12.94c.04-.3.06-.61.06-.94 0-.32-.02-.64-.07-.94l2.03-1.58a.49.49 0 0 0 .12-.61l-1.92-3.32a.488.488 0 0 0-.59-.22l-2.39.96c-.5-.38-1.03-.7-1.62-.94l-.36-2.54a.484.484 0 0 0-.48-.41h-3.84c-.24 0-.43.17-.47.41l-.36 2.54c-.59.24-1.13.57-1.62.94l-2.39-.96c-.22-.08-.47 0-.59.22L2.74 8.87c-.12.21-.08.47.12.61l2.03 1.58c-.05.3-.09.63-.09.94s.02.64.07.94l-2.03 1.58a.49.49 0 0 0-.12.61l1.92 3.32c.12.22.37.29.59.22l2.39-.96c.5.38 1.03.7 1.62.94l.36 2.54c.05.24.24.41.48.41h3.84c.24 0 .44-.17.47-.41l.36-2.54c.59-.24 1.13-.56 1.62-.94l2.39.96c.22.08.47 0 .59-.22l1.92-3.32c.12-.22.07-.47-.12-.61l-2.01-1.58zM12 15.6c-1.98 0-3.6-1.62-3.6-3.6s1.62-3.6 3.6-3.6 3.6 1.62 3.6 3.6-1.62 3.6-3.6 3.6z"/></svg>
<div class="a" style="left:0px;top:670px;width:1279px;height:50px;background:linear-gradient(to bottom,rgba(0,0,0,0) 0%,rgba(0,0,0,0.015) 40%,rgba(0,0,0,0.05) 75%,rgba(0,0,0,0.095) 100%)"></div>
<svg class="a" style="left:0;top:708px" width="6" height="12" viewBox="0 0 6 12"><path d="M0 5.5Q1.1 9.5 1.7 12H0z" fill="#111"/></svg>
</body></html>
